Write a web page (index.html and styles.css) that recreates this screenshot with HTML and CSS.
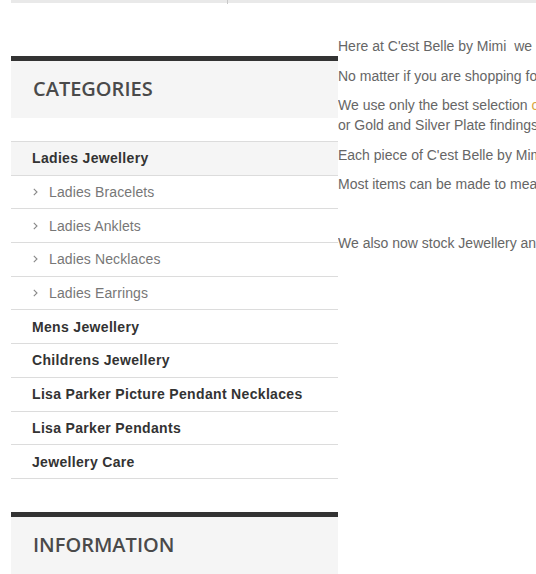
FILE: index.html
```html
<!DOCTYPE html>
<html lang="en">
<head>
<meta charset="utf-8">
<title>C'est Belle by Mimi</title>
<link rel="stylesheet" href="styles.css">
</head>
<body>
<div class="topbar"><span class="topbar-sep"></span></div>
<div class="layout">
  <aside class="sidebar">
    <section class="block">
      <h2 class="block-title">Categories</h2>
    </section>
    <ul class="cat-list">
      <li class="cat active"><a href="#">Ladies Jewellery</a></li>
      <li class="cat sub"><a href="#"><svg class="chev" width="5" height="8" viewBox="0 0 5 8"><path d="M0.8 0.8 L4 4 L0.8 7.2" fill="none" stroke="#888" stroke-width="1.1"/></svg>Ladies Bracelets</a></li>
      <li class="cat sub"><a href="#"><svg class="chev" width="5" height="8" viewBox="0 0 5 8"><path d="M0.8 0.8 L4 4 L0.8 7.2" fill="none" stroke="#888" stroke-width="1.1"/></svg>Ladies Anklets</a></li>
      <li class="cat sub"><a href="#"><svg class="chev" width="5" height="8" viewBox="0 0 5 8"><path d="M0.8 0.8 L4 4 L0.8 7.2" fill="none" stroke="#888" stroke-width="1.1"/></svg>Ladies Necklaces</a></li>
      <li class="cat sub"><a href="#"><svg class="chev" width="5" height="8" viewBox="0 0 5 8"><path d="M0.8 0.8 L4 4 L0.8 7.2" fill="none" stroke="#888" stroke-width="1.1"/></svg>Ladies Earrings</a></li>
      <li class="cat"><a href="#">Mens Jewellery</a></li>
      <li class="cat"><a href="#">Childrens Jewellery</a></li>
      <li class="cat"><a href="#">Lisa Parker Picture Pendant Necklaces</a></li>
      <li class="cat"><a href="#">Lisa Parker Pendants</a></li>
      <li class="cat"><a href="#">Jewellery Care</a></li>
    </ul>
    <section class="block block-info">
      <h2 class="block-title">Information</h2>
    </section>
  </aside>
  <main class="content">
    <p>Here at C'est Belle by Mimi&nbsp; we <span class="accent">create</span> beautiful handmade jewellery for every occasion.</p>
    <p>No matter if you are shopping for yourself or for a gift, we have something for everyone.</p>
    <p>We use only the best selection <span class="accent">of</span> Swarovski crystals, glass and semi-precious beads with Sterling Silver<br>or Gold and Silver Plate findings and wire.</p>
    <p>Each piece of C'est Belle by Mimi jewellery is lovingly handmade.</p>
    <p>Most items can be made to measure, just ask.</p>
    <p>&nbsp;</p>
    <p>We also now stock Jewellery and gifts by Lisa Parker.</p>
  </main>
</div>
</body>
</html>
```

FILE: styles.css
```css
html, body {
  margin: 0;
  padding: 0;
  overflow: hidden;
  background: #fff;
}
body {
  font-family: "Liberation Sans", Arial, sans-serif;
  font-size: 14px;
  color: #666;
}
.topbar {
  margin-left: 11px;
  height: 3px;
  background: #e9e9e9;
  display: flex;
}
.topbar-sep {
  margin-left: 216px;
  width: 1px;
  height: 4px;
  background: #c8c8c8;
}
.layout {
  display: flex;
  align-items: flex-start;
}
.sidebar {
  flex: 0 0 327px;
  margin-left: 11px;
  padding-top: 53px;
}
.block {
  border-top: 5px solid #333;
  background: #f5f5f5;
  box-sizing: border-box;
  height: 62px;
  display: flex;
  align-items: center;
  padding: 0 22px 2px;
}
.block-title {
  margin: 0;
  font-family: "Open Sans", sans-serif;
  font-weight: 600;
  font-size: 20px;
  text-transform: uppercase;
  color: #4a4a4a;
}
.cat-list {
  list-style: none;
  margin: 23px 0 33px;
  padding: 0;
  border-top: 1px solid #dcdcdc;
}
.cat {
  border-bottom: 1px solid #dcdcdc;
}
.cat a {
  display: flex;
  align-items: center;
  padding: 6.35px 21px;
  line-height: 20px;
  font-weight: bold;
  letter-spacing: 0.33px;
  color: #333;
  text-decoration: none;
}
.cat.active {
  background: #f5f5f5;
}
.cat.sub a {
  font-weight: normal;
  letter-spacing: 0.12px;
  color: #777;
  padding-left: 22px;
}
.chev {
  margin-right: 11px;
  flex: none;
}
.content {
  flex: 1;
  min-width: 0;
  overflow: hidden;
  padding-top: 33px;
}
.content p {
  margin: 0 0 9.5px;
  line-height: 20px;
  white-space: nowrap;
}
.accent {
  color: #d9a441;
}
```
